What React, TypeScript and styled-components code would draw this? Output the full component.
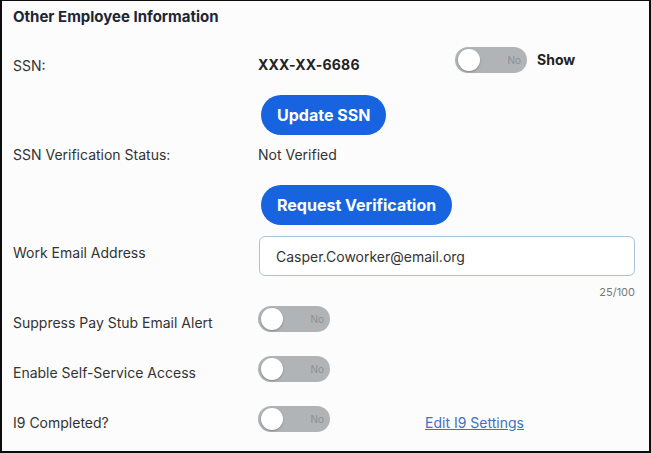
import styled, { createGlobalStyle } from "styled-components";

const GlobalStyle = createGlobalStyle`
  html, body {
    margin: 0;
    padding: 0;
    background: #fcfcfc;
  }
  * {
    box-sizing: border-box;
  }
`;

const Toggle = ({ label = "No" }: { label?: string }) => {
  return (
    <ToggleTrack role="switch" aria-checked={false}>
      <Knob />
      <ToggleText>{label}</ToggleText>
    </ToggleTrack>
  );
};

const App = () => {
  return (
    <>
      <GlobalStyle />
      <Panel>
        <Title>Other Employee Information</Title>

        <Row $top={20}>
          <Label $offset={9}>SSN:</Label>
          <ValueCell $width={197}>
            <SsnValue>XXX-XX-6686</SsnValue>
          </ValueCell>
          <ShowGroup>
            <Toggle />
            <ShowText>Show</ShowText>
          </ShowGroup>
        </Row>

        <ButtonRow $top={19}>
          <PillButton>Update SSN</PillButton>
        </ButtonRow>

        <Row $top={10}>
          <Label>SSN Verification Status:</Label>
          <PlainValue>Not Verified</PlainValue>
        </Row>

        <ButtonRow $top={20}>
          <PillButton>Request Verification</PillButton>
        </ButtonRow>

        <Row $top={11}>
          <Label $offset={7}>Work Email Address</Label>
          <EmailInput defaultValue="Casper.Coworker@email.org" />
        </Row>
        <Counter>25/100</Counter>

        <Row $top={7}>
          <Label $offset={7}>Suppress Pay Stub Email Alert</Label>
          <Toggle />
        </Row>

        <Row $top={23}>
          <Label $offset={7}>Enable Self-Service Access</Label>
          <Toggle />
        </Row>

        <Row $top={23}>
          <Label $offset={7}>I9 Completed?</Label>
          <ValueCell $width={167}>
            <Toggle />
          </ValueCell>
          <EditLink href="#" $offset={7}>
            Edit I9 Settings
          </EditLink>
        </Row>
      </Panel>
    </>
  );
};

const font = `Inter, Roboto, "Liberation Sans", sans-serif`;

const Panel = styled.div`
  width: 651px;
  height: 453px;
  border: 2px solid #0d0d0d;
  border-top-width: 1px;
  background: #fcfcfc;
  padding: 0 14px 0 11px;
  font-family: ${font};
  color: #333333;
  overflow: hidden;
`;

const Title = styled.h2`
  margin: 6px 0 0;
  font-size: 15px;
  line-height: 20px;
  font-weight: 700;
  color: #1e2533;
`;

const Row = styled.div<{ $top?: number }>`
  display: flex;
  align-items: flex-start;
  margin-top: ${(p) => p.$top ?? 0}px;
`;

const Label = styled.div<{ $offset?: number }>`
  width: 245px;
  flex: none;
  margin-top: ${(p) => p.$offset ?? 0}px;
  font-size: 14px;
  line-height: 20px;
  color: #333333;
`;

const ValueCell = styled.div<{ $width: number }>`
  width: ${(p) => p.$width}px;
  flex: none;
`;

const SsnValue = styled.div`
  margin-top: 8px;
  font-size: 14px;
  line-height: 20px;
  font-weight: 700;
  letter-spacing: 0.2px;
  color: #222222;
`;

const PlainValue = styled.div`
  font-size: 14px;
  line-height: 20px;
  color: #333333;
`;

const ShowGroup = styled.div`
  display: flex;
  align-items: center;
  gap: 10px;
`;

const ShowText = styled.span`
  font-size: 14px;
  line-height: 20px;
  font-weight: 700;
  color: #222222;
  margin-top: -1px;
`;

const ToggleTrack = styled.div`
  position: relative;
  width: 72px;
  height: 26px;
  flex: none;
  border-radius: 13px;
  background: #b1b4b6;
  display: flex;
  align-items: center;
  justify-content: flex-end;
  padding-right: 6px;
`;

const Knob = styled.span`
  position: absolute;
  left: 3px;
  top: 2px;
  width: 22px;
  height: 22px;
  border-radius: 50%;
  background: #ffffff;
  box-shadow: 0 1px 2px rgba(0, 0, 0, 0.25);
`;

const ToggleText = styled.span`
  font-size: 10px;
  line-height: 12px;
  color: #8c8f92;
`;

const ButtonRow = styled.div<{ $top?: number }>`
  display: flex;
  margin-top: ${(p) => p.$top ?? 0}px;
  padding-left: 248px;
`;

const PillButton = styled.button`
  height: 40px;
  padding: 0 16px;
  border: none;
  border-radius: 20px;
  background: #1763e0;
  color: #ffffff;
  font-family: ${font};
  font-size: 16px;
  font-weight: 700;
  cursor: pointer;
`;

const EmailInput = styled.input`
  flex: 1;
  min-width: 0;
  height: 40px;
  margin-left: 1px;
  padding: 0 16px;
  border: 1px solid #a9c3d9;
  border-radius: 6px;
  background: #ffffff;
  font-family: ${font};
  font-size: 14px;
  color: #333333;
  outline: none;
`;

const Counter = styled.div`
  margin-top: 9px;
  text-align: right;
  font-size: 11px;
  line-height: 14px;
  color: #777777;
`;

const EditLink = styled.a<{ $offset?: number }>`
  margin-top: ${(p) => p.$offset ?? 0}px;
  font-size: 14px;
  line-height: 20px;
  color: #3f72bd;
  text-decoration: underline;
`;

export default App;
